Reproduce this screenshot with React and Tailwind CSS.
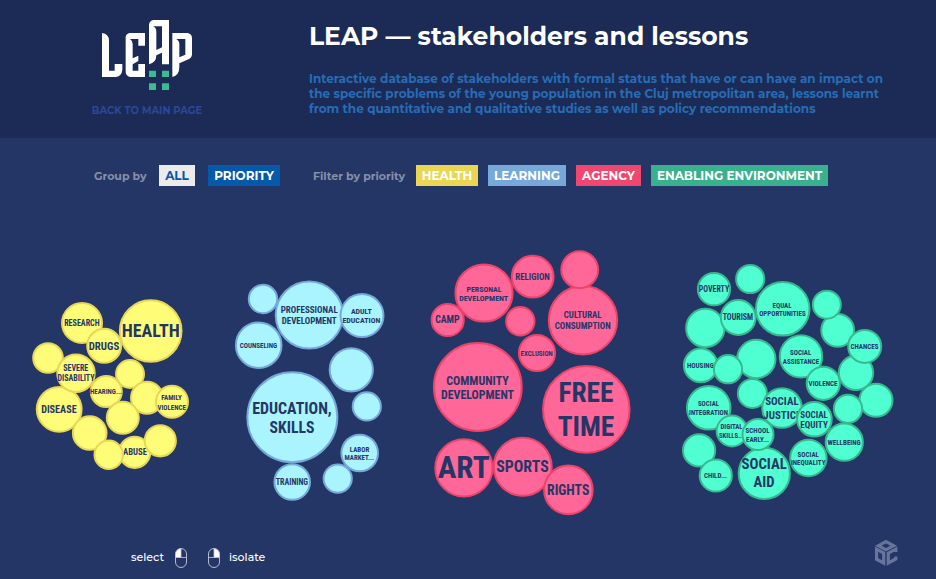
import React from "react";

const CONDENSED = "'Roboto Condensed', Roboto, 'Liberation Sans', sans-serif";

// Bubble: [cx, cy, outer radius, lines]; line: [text, cx, cy, width, font size]
const GROUPS = [
  {
    fill: "#fffd78",
    stroke: "#e8d657",
    bubbles: [
      [82, 323, 21, [["RESEARCH", 82.2, 323.3, 35.5, 8.6]]],
      [150.7, 331, 31.8, [["HEALTH", 151, 330.8, 58, 17.8]]],
      [104.2, 345.8, 18, [["DRUGS", 104.3, 346.2, 30.5, 11.3]]],
      [48, 358, 15.8, []],
      [59.2, 409.3, 23.4, [["DISEASE", 59.2, 409.6, 35.5, 10.2]]],
      [76, 373.3, 19.7, [["SEVERE", 76, 368.3, 25, 8.7], ["DISABILITY", 76.3, 378.4, 37, 8.7]]],
      [130, 374, 15, []],
      [106.3, 391.5, 16.5, [["HEARING...", 106.3, 391.7, 32, 7.5]]],
      [147, 397.7, 17, []],
      [172, 401.8, 17, [["FAMILY", 171.8, 397.7, 20.5, 7.8], ["VIOLENCE", 172, 406.8, 28.5, 7.8]]],
      [122.8, 417.8, 17, []],
      [89.7, 433, 17.8, []],
      [134.7, 452.3, 16.6, [["ABUSE", 135.3, 452, 24, 9.2]]],
      [108.7, 454.7, 15.2, []],
      [160.3, 440.8, 16.6, []],
    ],
  },
  {
    fill: "#a9f4ff",
    stroke: "#76a8dc",
    bubbles: [
      [263, 299, 15.2, []],
      [309.3, 315, 34.6, [["PROFESSIONAL", 309.5, 310.2, 57, 9.2], ["DEVELOPMENT", 309.5, 321.2, 55, 9.2]]],
      [362, 315.6, 22.5, [["ADULT", 361.7, 311.3, 21, 8.1], ["EDUCATION", 361.7, 320.3, 38, 8.1]]],
      [258.7, 345.2, 23.8, [["COUNSELING", 258.7, 345.7, 37.5, 7.1]]],
      [351.3, 369.8, 22.6, []],
      [366.8, 406.4, 15.1, []],
      [292.3, 417.2, 46, [["EDUCATION,", 292.3, 408.6, 79.5, 16], ["SKILLS", 292.3, 427.5, 45, 16]]],
      [359.7, 453, 19.3, [["LABOR", 359.8, 449.7, 19.5, 7.2], ["MARKET...", 359.5, 457.7, 29.5, 7.2]]],
      [337.7, 478.6, 15.1, []],
      [292.2, 482, 18.8, [["TRAINING", 292.2, 482.3, 32.3, 8.2]]],
    ],
  },
  {
    fill: "#ff6799",
    stroke: "#ee4369",
    bubbles: [
      [447.7, 320, 17.1, [["CAMP", 447.7, 319.8, 24.5, 10.1]]],
      [484, 293, 29.6, [["PERSONAL", 484.3, 289.3, 35.2, 8.1], ["DEVELOPMENT", 484, 298.3, 49, 8.1]]],
      [532.7, 276.7, 21.9, [["RELIGION", 532.8, 277, 34.5, 9.1]]],
      [583, 320.2, 35.2, [["CULTURAL", 583, 315, 37.8, 9.2], ["CONSUMPTION", 583, 326, 56, 9.2]]],
      [579.7, 269.7, 19.4, []],
      [520.3, 321.2, 15.2, []],
      [537, 353, 19.1, [["EXCLUSION", 537, 353.7, 32.3, 7.1]]],
      [477.8, 387, 44.9, [["COMMUNITY", 477.8, 380.7, 62.5, 12.1], ["DEVELOPMENT", 477.8, 394.8, 73, 12.1]]],
      [586.3, 409.4, 44.3, [["FREE", 586.2, 392.3, 55, 28.2], ["TIME", 586.3, 426, 56.7, 28.2]]],
      [463.9, 467.9, 29.6, [["ART", 464, 466.9, 52, 31]]],
      [522.7, 466.8, 30, [["SPORTS", 522.8, 466.5, 52.5, 15.9]]],
      [568.4, 489.9, 25.3, [["RIGHTS", 568.5, 490.2, 42.3, 13.9]]],
    ],
  },
  {
    fill: "#50ffd1",
    stroke: "#39b890",
    bubbles: [
      [714, 289.2, 17.1, [["POVERTY", 714.3, 289.3, 30.5, 8.5]]],
      [750.2, 279, 15.1, []],
      [705.3, 328, 20.2, []],
      [782.7, 308.8, 27.8, [["EQUAL", 782.4, 305.8, 19, 7.2], ["OPPORTUNITIES", 782.7, 313.8, 46.5, 7.2]]],
      [738.2, 317.5, 18.4, [["TOURISM", 738.2, 317.3, 30.5, 8.5]]],
      [837.7, 330.4, 17.4, []],
      [826.8, 304.7, 15, []],
      [856, 372.8, 18.2, []],
      [864.7, 346.4, 17.5, [["CHANCES", 864.8, 346.6, 28, 7.5]]],
      [756.3, 359, 20.2, []],
      [700.7, 365.4, 17.8, [["HOUSING", 700.7, 365.7, 27, 7.5]]],
      [728, 369.2, 15.1, []],
      [801, 356.4, 22.2, [["SOCIAL", 801, 352.7, 21.3, 7.7], ["ASSISTANCE", 801.3, 361.7, 36.5, 7.7]]],
      [823.3, 383.3, 17.6, [["VIOLENCE", 823.4, 383.7, 29, 7.7]]],
      [876, 400.3, 17.5, []],
      [848, 408.8, 15.1, []],
      [752.4, 393.4, 15.5, []],
      [708.7, 407.8, 22.8, [["SOCIAL", 708.8, 403.7, 21.2, 7.8], ["INTEGRATION", 708.8, 412.7, 39, 7.8]]],
      [782, 408, 20.8, [["SOCIAL", 782.2, 401.3, 33.5, 11.8], ["JUSTICE", 782.6, 415.2, 38, 11.8]]],
      [814.4, 419.2, 18.3, [["SOCIAL", 814.4, 414.2, 27.5, 9.6], ["EQUITY", 814.4, 425, 27.5, 9.6]]],
      [732, 431, 16.4, [["DIGITAL", 731.8, 426.7, 22, 7.8], ["SKILLS...", 731.8, 435.7, 25, 7.8]]],
      [764.3, 473.4, 26.6, [["SOCIAL", 764.5, 464, 45.5, 15.1], ["AID", 764.3, 482, 21, 15.1]]],
      [758, 434.5, 16.5, [["SCHOOL", 757.8, 430.7, 24, 7.8], ["EARLY...", 757.8, 439.7, 23, 7.8]]],
      [844.3, 442.2, 19.6, [["WELLBEING", 844.4, 442.5, 33, 7.6]]],
      [699.1, 450.4, 17.1, []],
      [715.8, 475.5, 17.1, [["CHILD...", 715.8, 475.7, 23, 7.5]]],
      [808.4, 458, 19.2, [["SOCIAL", 808.5, 454.7, 21.3, 7.4], ["INEQUALITY", 808.5, 462.7, 34.5, 7.4]]],
    ],
  },
];

function Bubble({ data, fill, stroke }) {
  const [cx, cy, r, lines] = data;
  return (
    <g>
      <circle cx={cx} cy={cy} r={r - 1} fill={fill} stroke={stroke} strokeWidth="2" />
      {lines.map(([text, x, y, width, size]) => (
        <text
          key={text}
          x={x - width / 2 - 0.3}
          y={y + size * 0.355}
          fontSize={size}
          textLength={width}
          lengthAdjust="spacingAndGlyphs"
          fontFamily={CONDENSED}
          fontWeight="700"
          fill="#243666"
        >
          {text}
        </text>
      ))}
    </g>
  );
}

function LeapLogo() {
  return (
    <svg width="92" height="72" viewBox="63 27 276 216" className="block">
      <g fill="#fff" fillRule="evenodd">
        <path d="M66 69Q87 72 87 92V182H104V162H127V180Q125 198 108 201H66z" />
        <path d="M149 69H195V107H175V87H150Q158 92 158 102V145L175 137V153L158 163V182H175V162H195V201H150Q137 197 137 186V80Q139 71 149 69z" />
        <path d="M220 30H267V163H246V128L229 136Q229 158 207 163V44Q209 32 220 30zM219 49Q229 53 229 65V120L246 112V49z" />
        <path d="M277 69H323Q336 72 336 84V134Q334 146 322 149L298 160V172Q298 196 277 201zM289 87Q298 92 298 103V142L316 134V87z" />
      </g>
      <path
        fill="#3dba92"
        d="M207 182h21v19h-21zM246 182h21v19h-21zM207 220h21v20h-21zM246 220h21v20h-21z"
      />
    </svg>
  );
}

function Mouse({ side }) {
  return (
    <svg width="12" height="20" viewBox="0 0 12 20" className="block">
      <path
        d={side === "left" ? "M6 .5A5.5 5.5 0 0 0 .5 6v3.5H6z" : "M6 .5A5.5 5.5 0 0 1 11.5 6v3.5H6z"}
        fill="#fff"
      />
      <rect x=".5" y=".5" width="11" height="19" rx="5.5" fill="none" stroke="#c3c9d8" strokeWidth=".9" />
      <path d="M.5 9.5h11M6 .5v9" stroke="#c3c9d8" strokeWidth=".8" />
    </svg>
  );
}

function CubeLogo() {
  return (
    <svg width="24" height="28" viewBox="0 0 24 28" className="block">
      <g fill="none" stroke="#66759b" strokeWidth="3.2">
        <path d="M12 2.6 19.6 6.7 12 10.8 4.4 6.7z" />
        <path d="M2.6 10.2 9.7 14V24L2.6 20.2z" />
        <path d="M21.8 13V10.2L14.3 14.1V24L21.8 20V17.4" />
      </g>
    </svg>
  );
}

function Tag({ className, children }) {
  return (
    <button className={`flex h-[21px] items-center justify-center text-[12px] font-bold leading-none ${className}`}>
      <span className="whitespace-nowrap">{children}</span>
    </button>
  );
}

export default function App() {
  return (
    <div className="flex h-[579px] w-[936px] flex-col overflow-hidden bg-[#243666] font-['Montserrat',Inter,'Open_Sans',sans-serif]">
      <header className="flex h-[138px] shrink-0 bg-[#1b2b55]">
        <div className="ml-[87px] flex w-[120px] flex-col items-center pt-[19px]">
          <LeapLogo />
          <a className="mt-[14px] whitespace-nowrap text-[10px] font-bold leading-3 text-[#2b479b]">
            BACK TO MAIN PAGE
          </a>
        </div>
        <div className="ml-[102px] pt-[21px]">
          <h1 className="whitespace-nowrap text-[25px] font-bold leading-[30px] tracking-[0.02px] text-white">
            LEAP — stakeholders and lessons
          </h1>
          <p className="mt-5 whitespace-nowrap text-[12px] font-bold leading-[15px] tracking-[0.012px] text-[#276cb6]">
            Interactive database of stakeholders with formal status that have or can have an impact on
            <br />
            the specific problems of the young population in the Cluj metropolitan area, lessons learnt
            <br />
            from the quantitative and qualitative studies as well as policy recommendations
          </p>
        </div>
      </header>

      <nav className="mt-[27px] flex h-[21px] shrink-0 items-center pl-[94px] text-[11px] font-bold text-[#8490a8]">
        <span className="w-[65px] whitespace-nowrap pt-[2px]">Group by</span>
        <Tag className="w-[36px] bg-[#ebebeb] text-[#0557a8]">ALL</Tag>
        <Tag className="ml-[13px] w-[72px] bg-[#0559a9] text-white">PRIORITY</Tag>
        <span className="ml-[33px] w-[103px] whitespace-nowrap pt-[2px]">Filter by priority</span>
        <div className="flex gap-[10px] text-white">
          <Tag className="w-[62px] bg-[#ebd653]">HEALTH</Tag>
          <Tag className="w-[78px] bg-[#76a8dc]">LEARNING</Tag>
          <Tag className="w-[65px] bg-[#f04770]">AGENCY</Tag>
          <Tag className="w-[177px] bg-[#3ab18e]">ENABLING ENVIRONMENT</Tag>
        </div>
      </nav>

      <main className="mt-[54px] shrink-0">
        <svg width="936" height="285" viewBox="0 240 936 285" className="block">
          {GROUPS.map((group) => (
            <g key={group.fill}>
              {group.bubbles.map((b, i) => (
                <Bubble key={i} data={b} fill={group.fill} stroke={group.stroke} />
              ))}
            </g>
          ))}
        </svg>
      </main>

      <footer className="mt-[13px] flex h-[40px] shrink-0 items-center justify-between pl-[131px] pr-[38px] text-[11px] font-medium text-white">
        <div className="flex items-center">
          <span className="w-[44px] pb-[2px]">select</span>
          <Mouse side="left" />
          <span className="w-[21px]" />
          <Mouse side="right" />
          <span className="ml-[9px] pb-[2px]">isolate</span>
        </div>
        <div className="mb-[11px]">
          <CubeLogo />
        </div>
      </footer>
    </div>
  );
}
